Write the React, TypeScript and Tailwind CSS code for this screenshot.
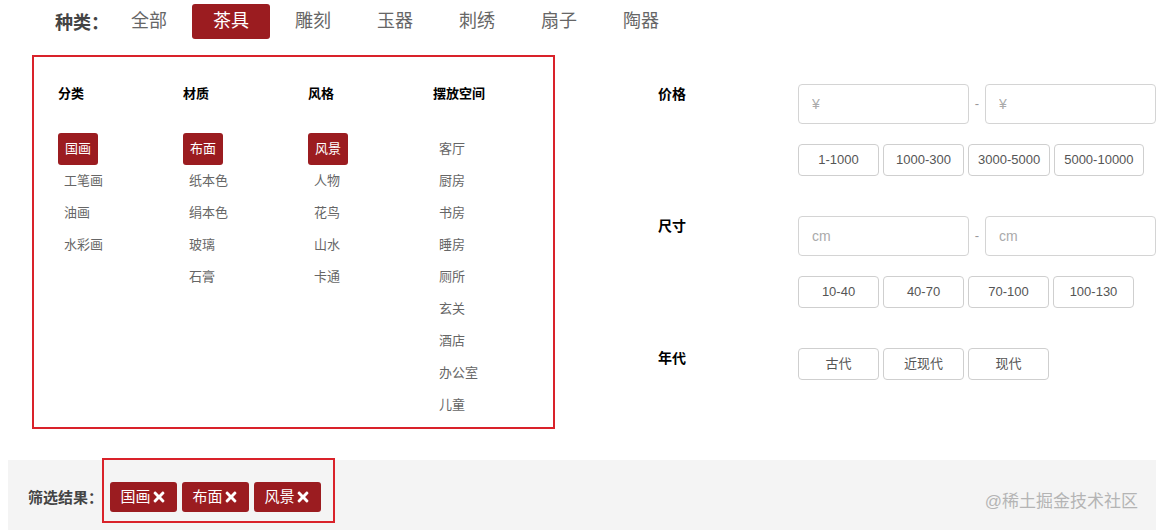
import { FaTimes } from 'react-icons/fa'

const kinds = ['全部', '茶具', '雕刻', '玉器', '刺绣', '扇子', '陶器']

const groups = [
  { title: '分类', items: ['国画', '工笔画', '油画', '水彩画'] },
  { title: '材质', items: ['布面', '纸本色', '绢本色', '玻璃', '石膏'] },
  { title: '风格', items: ['风景', '人物', '花鸟', '山水', '卡通'] },
  {
    title: '摆放空间',
    items: ['客厅', '厨房', '书房', '睡房', '厕所', '玄关', '酒店', '办公室', '儿童'],
  },
]

const priceRanges = ['1-1000', '1000-300', '3000-5000', '5000-10000']
const sizeRanges = ['10-40', '40-70', '70-100', '100-130']
const eras = ['古代', '近现代', '现代']
const picked = ['国画', '布面', '风景']

function Chip({ label }: { label: string }) {
  return (
    <button className="h-[32px] min-w-[81px] px-[9px] border border-[#cfcfcf] rounded-[4px] bg-white text-[13px] text-[#555] flex items-center justify-center">
      {label}
    </button>
  )
}

function RangeInputs({ placeholder }: { placeholder: string }) {
  return (
    <div className="flex items-center">
      <input
        placeholder={placeholder}
        className="w-[171px] h-[40px] border border-[#d4d4d4] rounded-[4px] px-[13px] text-[14px] placeholder:text-[#aaa] outline-none"
      />
      <span className="w-[16px] text-center text-[#999] text-[13px]">-</span>
      <input
        placeholder={placeholder}
        className="w-[171px] h-[40px] border border-[#d4d4d4] rounded-[4px] px-[13px] text-[14px] placeholder:text-[#aaa] outline-none"
      />
    </div>
  )
}

function App() {
  return (
    <div className="relative w-[1156px] h-[530px] bg-white overflow-hidden font-['Liberation_Sans','Noto_Sans_CJK_SC',sans-serif]">
      {/* top kind nav */}
      <div className="flex items-center h-[42px] pt-[1px]">
        <span className="ml-[55px] w-[55px] text-[18px] font-bold text-[#444] font-['Noto_Sans_CJK_SC',sans-serif]">
          种类：
        </span>
        <div className="flex gap-[4px]">
          {kinds.map((k) => (
            <span
              key={k}
              className={
                k === '茶具'
                  ? 'w-[78px] h-[35px] flex items-center justify-center text-[18px] rounded-[3px] bg-[#9b1c20] text-white'
                  : 'w-[78px] h-[35px] flex items-center justify-center text-[18px] text-[#666]'
              }
            >
              {k}
            </span>
          ))}
        </div>
      </div>

      <div className="flex mt-[13px]">
        {/* category groups */}
        <div className="ml-[32px] w-[523px] h-[374px] shrink-0 border-2 border-[#d9222a] pl-[24px] pt-[27px] flex">
          {groups.map((g) => (
            <div key={g.title} className="w-[125px] shrink-0">
              <div className="h-[20px] leading-[20px] text-[13px] font-bold text-black">{g.title}</div>
              <div className="mt-[29px] flex flex-col">
                {g.items.map((it, i) => (
                  <div key={it} className="h-[32px] flex items-center">
                    <span
                      className={
                        i === 0 && g.title !== '摆放空间'
                          ? 'h-[32px] px-[7px] flex items-center rounded-[3px] bg-[#9b1c20] text-white text-[13px]'
                          : 'px-[6px] text-[13px] text-[#666]'
                      }
                    >
                      {it}
                    </span>
                  </div>
                ))}
              </div>
            </div>
          ))}
        </div>

        {/* right filters */}
        <div className="ml-[103px] mt-[29px] flex flex-col">
          <div className="flex">
            <div className="w-[140px] text-[14px] leading-[20px] font-bold text-black">价格</div>
            <div>
              <RangeInputs placeholder="¥" />
              <div className="flex gap-[4px] mt-[20px]">
                {priceRanges.map((p) => (
                  <Chip key={p} label={p} />
                ))}
              </div>
            </div>
          </div>

          <div className="flex mt-[40px]">
            <div className="w-[140px] text-[14px] leading-[20px] font-bold text-black">尺寸</div>
            <div>
              <RangeInputs placeholder="cm" />
              <div className="flex gap-[4px] mt-[20px]">
                {sizeRanges.map((p) => (
                  <Chip key={p} label={p} />
                ))}
              </div>
            </div>
          </div>

          <div className="flex mt-[40px]">
            <div className="w-[140px] text-[14px] leading-[20px] font-bold text-black">年代</div>
            <div className="flex gap-[4px]">
              {eras.map((p) => (
                <Chip key={p} label={p} />
              ))}
            </div>
          </div>
        </div>
      </div>

      {/* result bar */}
      <div className="ml-[8px] mt-[31px] h-[70px] bg-[#f4f4f4] flex">
        <span className="pl-[20px] w-[94px] pt-[27px] text-[15px] leading-[20px] font-bold text-[#444] whitespace-nowrap font-['Noto_Sans_CJK_SC',sans-serif]">
          筛选结果：
        </span>
        <div className="-mt-[2px] h-[65px] w-[233px] border-2 border-[#d9222a] pl-[6px] pt-[22px] flex items-start gap-[5px]">
          {picked.map((p) => (
            <span
              key={p}
              className="h-[30px] w-[67px] rounded-[3px] bg-[#9b1c20] text-white text-[15px] flex items-center justify-center"
            >
              {p}
              <FaTimes className="w-[16px] h-[16px]" />
            </span>
          ))}
        </div>
      </div>

      <span className="absolute right-[18px] bottom-[18px] text-[17px] leading-[20px] text-[#b4b4b4]">
        @稀土掘金技术社区
      </span>
    </div>
  )
}

export default App
